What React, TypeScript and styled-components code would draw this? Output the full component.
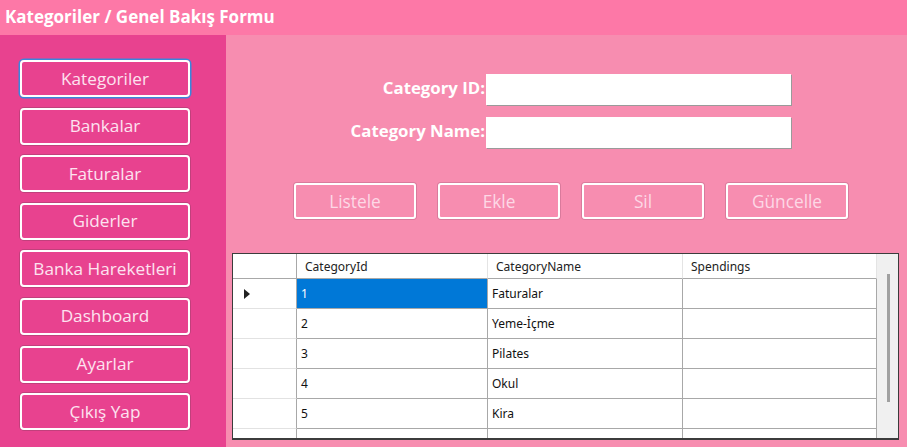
import React from "react";
import styled, { createGlobalStyle } from "styled-components";

const Global = createGlobalStyle`
  html, body { margin: 0; padding: 0; }
  body { font-family: "Open Sans", "Noto Sans", sans-serif; }
  * { box-sizing: border-box; }
`;

const Window = styled.div`
  width: 907px;
  height: 447px;
  display: flex;
  flex-direction: column;
  overflow: hidden;
`;

const TitleBar = styled.div`
  height: 35px;
  flex: none;
  background: #fd78a7;
  color: #ffffff;
  font-weight: 700;
  font-size: 17px;
  display: flex;
  align-items: center;
  padding-left: 5px;
  padding-bottom: 2px;
`;

const Body = styled.div`
  flex: 1;
  display: flex;
  min-height: 0;
`;

const Sidebar = styled.nav`
  width: 226px;
  flex: none;
  background: #e8428f;
  display: flex;
  flex-direction: column;
  gap: 10.6px;
  padding: 25px 0 0 20px;
`;

const NavButton = styled.div<{ $focused?: boolean }>`
  width: 170px;
  height: 37px;
  border: 2px solid #ffffff;
  border-radius: 4px;
  box-shadow: ${(p) =>
    p.$focused ? "0 0 0 1.5px #3a86dc" : "0 0 0 1px rgba(120,60,90,0.35)"};
  color: #fde3ef;
  font-size: 17.2px;
  display: flex;
  align-items: center;
  justify-content: center;
  padding-bottom: 1px;
  white-space: nowrap;
`;

const Main = styled.main`
  flex: 1;
  background: #f78db0;
  display: flex;
  flex-direction: column;
`;

const Form = styled.div`
  display: grid;
  grid-template-columns: 260px 305px;
  row-gap: 12px;
  padding-top: 39px;
  align-items: center;
`;

const Label = styled.label`
  justify-self: end;
  color: #ffffff;
  font-weight: 700;
  font-size: 16.8px;
  margin-right: 1px;
  padding-bottom: 4px;
`;

const TextBox = styled.div`
  height: 31px;
  background: #ffffff;
  box-shadow: 1px 1px 0 #9a9a9a;
`;

const ButtonRow = styled.div`
  display: flex;
  gap: 22px;
  padding: 35px 0 0 68px;
`;

const ActionButton = styled.div`
  width: 122px;
  height: 36px;
  border: 2px solid #ffffff;
  border-radius: 3px;
  box-shadow: 0 0 0 1px rgba(150,80,110,0.3);
  color: #fdd8e6;
  font-size: 17.3px;
  display: flex;
  align-items: center;
  justify-content: center;
`;

const Grid = styled.div`
  margin: 34px 0 0 6px;
  width: 667px;
  height: 187px;
  border: 1px solid #3c3c3c;
  border-bottom-width: 2px;
  display: flex;
  overflow: hidden;
  background: #ffffff;
  font-family: "Noto Sans", "Open Sans", sans-serif;
  font-size: 12px;
  color: #111;
`;

const Table = styled.div`
  display: grid;
  grid-template-columns: 64px 191px 195px 194px;
  grid-auto-rows: 30px;
  grid-template-rows: 25px;
  align-content: start;
`;

const HeadCell = styled.div<{ $first?: boolean }>`
  border-right: 1px solid ${(p) => (p.$first ? "#a8a8a8" : "#e4e4e4")};
  border-bottom: 1px solid #a8a8a8;
  display: flex;
  align-items: center;
  padding-left: 8px;
  color: #222;
`;

const RowHead = styled.div`
  border-right: 1px solid #a8a8a8;
  border-bottom: 1px solid #e2e2e2;
  display: flex;
  align-items: center;
  padding-left: 11px;
`;

const Cell = styled.div<{ $selected?: boolean }>`
  border-right: 1px solid #a8a8a8;
  border-bottom: 1px solid #a8a8a8;
  background: ${(p) => (p.$selected ? "#0078d7" : "#ffffff")};
  color: ${(p) => (p.$selected ? "#ffffff" : "#111")};
  display: flex;
  align-items: center;
  padding-left: 4px;
`;

const ScrollBar = styled.div`
  width: 21px;
  flex: none;
  background: #f0f0f0;
  padding: 20px 0 0 10px;
`;

const Thumb = styled.div`
  width: 3px;
  height: 128px;
  background: #a0a0a0;
`;

const navItems = [
  "Kategoriler",
  "Bankalar",
  "Faturalar",
  "Giderler",
  "Banka Hareketleri",
  "Dashboard",
  "Ayarlar",
  "Çıkış Yap",
];

const rows = [
  ["1", "Faturalar"],
  ["2", "Yeme-İçme"],
  ["3", "Pilates"],
  ["4", "Okul"],
  ["5", "Kira"],
  ["6", "Market"],
];

const Arrow = () => (
  <svg width="7" height="10" viewBox="0 0 7 10">
    <path d="M0 0 L6 5 L0 10 Z" fill="#222" />
  </svg>
);

export default function App() {
  return (
    <Window>
      <Global />
      <TitleBar>Kategoriler / Genel Bakış Formu</TitleBar>
      <Body>
        <Sidebar>
          {navItems.map((n, i) => (
            <NavButton key={n} $focused={i === 0}>
              {n}
            </NavButton>
          ))}
        </Sidebar>
        <Main>
          <Form>
            <Label>Category ID:</Label>
            <TextBox />
            <Label>Category Name:</Label>
            <TextBox />
          </Form>
          <ButtonRow>
            {["Listele", "Ekle", "Sil", "Güncelle"].map((b) => (
              <ActionButton key={b}>{b}</ActionButton>
            ))}
          </ButtonRow>
          <Grid>
            <Table>
              <HeadCell $first />
              <HeadCell>CategoryId</HeadCell>
              <HeadCell>CategoryName</HeadCell>
              <HeadCell>Spendings</HeadCell>
              {rows.map(([id, name], i) => (
                <React.Fragment key={id}>
                  <RowHead>{i === 0 ? <Arrow /> : null}</RowHead>
                  <Cell $selected={i === 0}>{id}</Cell>
                  <Cell>{name}</Cell>
                  <Cell />
                </React.Fragment>
              ))}
            </Table>
            <ScrollBar>
              <Thumb />
            </ScrollBar>
          </Grid>
        </Main>
      </Body>
    </Window>
  );
}
